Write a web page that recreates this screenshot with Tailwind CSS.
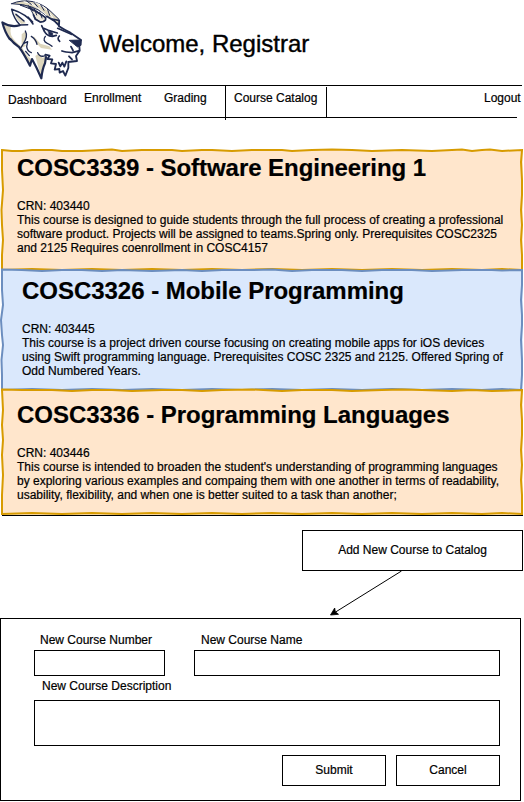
<!DOCTYPE html>
<html lang="en">
<head>
<meta charset="utf-8">
<title>Course Catalog</title>
<script src="https://cdn.jsdelivr.net/npm/@tailwindcss/browser@4"></script>
</head>
<body class="bg-white">
<div class="flex h-[802px] w-[524px] flex-col overflow-hidden bg-white font-['Liberation_Sans',Arial,sans-serif] text-[12px] leading-[14px] text-black [-webkit-text-stroke:0.2px_black]">
  <header class="flex h-[85px] shrink-0">
    <svg class="h-[84px] w-[90px] shrink-0" viewBox="0 0 270 252" fill="none" stroke="#1f2a50" stroke-linejoin="round" stroke-linecap="round">
      <path d="M7 67 Q24 79 43 78 L58 79 L34 29 L78 45 L110 43 L160 60 L178 79 L242 120 L240 151 L229 184 L207 188 L196 227 L188 212 L178 216 L162 188 L145 168 L135 188 L124 235 L94 181 L90 200 L55 143 L28 119 Z" fill="#fff" stroke="none"/>
      <path d="M7 67 Q17 96 29 117 L57 141 L91 198 L94 177 Q76 164 67 143 L48 126 Q26 105 33 82 Q18 78 7 67Z" fill="#ddd6bd" stroke="none"/>
      <path d="M106 168 L124 235 L134 188 L143 164 L128 174 L117 160Z M65 103 L77 93 L81 111 L72 130 L78 137 L65 144Z M100 107 L121 131 L148 139 L156 149 L123 144 L103 123Z M42 37 L78 70 L64 72 Q48 58 42 37Z" fill="#ddd6bd" stroke="none"/>
      <path d="M35 11 Q66 -2 99 5 Q133 14 153 35 L177 58 L177 73 L159 60 L139 47 Q104 13 35 11Z" fill="#ddd6bd" stroke-width="3"/>
      <path d="M61 15 Q88 15 108 32 L135 51 L137 61 L121 67 L107 56 L92 28Z" fill="#eee9da" stroke-width="3"/>
      <path d="M72 5 Q94 8 112 22 L148 54 M100 6 Q128 14 146 35 L162 58" stroke="#fff" stroke-width="3"/>
      <path d="M80 3 L94 13 M101 6 L113 21 M122 14 L132 31 M142 26 L149 46 M86 17 L99 33 M103 26 L110 45 M119 36 L126 54" stroke-width="3"/>
      <path d="M87 23 Q108 33 137 53 Q139 66 121 66 L106 58 L100 44 M140 49 L163 63 L177 77 M157 57 L178 62 L177 77" stroke-width="5"/>
      <path d="M99 72 Q82 43 35 28 Q42 57 60 75 L83 74 M48 43 L72 63 M84 51 L98 66" stroke-width="4.5"/>
      <path d="M59 76 Q33 84 7 67 Q14 96 29 117 L57 141 Q70 158 90 197 L96 177 Q110 202 124 235 Q127 207 135 190 L138 171 M57 141 Q42 132 31 117" stroke-width="6.5"/>
      <path d="M76 93 Q85 109 70 131 L83 125 L80 140 Q82 154 94 158 M94 109 Q108 118 111 133 M113 158 Q120 173 136 167 M136 109 Q126 122 142 130 Q148 132 156 139 M69 133 L63 143 M77 154 L88 167" stroke-width="4"/>
      <path d="M129 84 L145 91 L172 99 M132 91 Q138 109 157 109 L169 106 M173 85 L214 103 M178 108 Q170 116 179 124 M125 77 L133 94" stroke-width="5"/>
      <path d="M145 94 L158 99 L158 108 L148 105Z" fill="#1f2a50" stroke-width="2"/>
      <path d="M209 121 L244 120 L243 136 L233 141 L224 134Z" fill="#1f2a50" stroke-width="3"/>
      <path d="M177 79 Q192 89 211 98 L243 120 M238 139 L239 152 L216 158 Q195 156 186 153 M239 152 L228 168 L231 183 L205 186 L205 204 L196 227 L189 213 L179 218 L178 207 L164 209 L168 192 L153 190 L157 178 L142 177 L149 167 L136 164 M176 188 L181 199 L187 188 L193 200 L199 184 M213 140 L219 151 M207 169 L216 178" stroke-width="5.5"/>
    </svg>
    <h1 class="ml-[9px] mt-[30px] whitespace-nowrap text-[24px] leading-[28px] [-webkit-text-stroke:0.4px_black]">Welcome, Registrar</h1>
  </header>

  <nav class="relative flex h-[65px] shrink-0 whitespace-nowrap">
    <svg class="absolute left-0 top-0 h-[40px] w-[524px]" viewBox="0 0 524 40" stroke="#000" shape-rendering="crispEdges"><path d="M2 .5H522M12 32.5H517M225.500 1V35M326.500 2V32"/></svg>
    <a class="ml-[8px] mt-[8px] w-[76px]">Dashboard</a>
    <a class="mt-[6px] w-[80px]">Enrollment</a>
    <a class="mt-[6px] w-[70px]">Grading</a>
    <a class="mt-[6px] w-[250px]">Course Catalog</a>
    <a class="mt-[6px]">Logout</a>
  </nav>

  <main class="ml-[2px] w-[521px] shrink-0 whitespace-nowrap border-b border-black">
    <section class="relative h-[120px] bg-[#ffe6cc] pl-[15px] pt-[4px]">
      <svg class="absolute -left-[2px] -top-[2px] h-[124px] w-[525px]" viewBox="-2 -2 525 124" fill="none" stroke="#d79b00" stroke-width="2"><path d="M0 0 L10 1 20 1 30 0 50 0 60 1 80 1 100 0 110 -.5 120 1 140 0 170 0 180 1 200 0 210 0 230 1 250 0 280 0 290 1 310 0 330 -.5 350 0 370 1 400 0 430 1 450 0 460 -.5 470 1 480 0 488 -.5 500 1 520 0 519 12 520 30 520 45 519 60 520 75 519 90 520 105 520 120 500 119 480 120 450 119 420 120 390 119 360 120 330 119 300 120 270 119 240 120 210 119 180 120 150 119 120 120 90 119 60 120 30 119 0 120 0 105 1 90 0 75 -.5 60 1 40 0 20Z"/></svg>
      <h2 class="text-[24px] font-bold leading-[28px] tracking-[-0.05px]">COSC3339 - Software Engineering 1</h2>
      <p class="mt-[17px]">CRN: 403440<br>This course is designed to guide students through the full process of creating a professional<br>software product. Projects will be assigned to teams.Spring only. Prerequisites COSC2325<br>and 2125 Requires coenrollment in COSC4157</p>
    </section>
    <section class="relative h-[120px] bg-[#dae8fc] pl-[20px] pt-[7px]">
      <svg class="absolute -left-[2px] -top-[2px] h-[124px] w-[525px]" viewBox="-2 -2 525 124" fill="none" stroke="#6c8ebf" stroke-width="2"><path d="M0 -.5 L20 0 40 1 60 0 80 0 100 1 120 0 150 1 180 0 200 1 220 0 250 0 270 -.5 290 1 310 0 340 0 360 1 380 0 410 0 430 1 460 0 490 0 500 .5 520 0 520 15 519 30 520 45 520 55 519 70 520 90 520 105 519 120 500 119 480 120 450 119 420 120 390 119 360 120 330 119 300 120 270 119 240 120 210 119 180 120 150 119 120 120 90 119 60 120 30 119 0 120 0 105 -.5 90 1 75 0 65 -1 50 1 35 0 20Z"/></svg>
      <h2 class="text-[24px] font-bold leading-[28px] tracking-[-0.03px]">COSC3326 - Mobile Programming</h2>
      <p class="mt-[17px]">CRN: 403445<br>This course is a project driven course focusing on creating mobile apps for iOS devices<br>using Swift programming language. Prerequisites COSC 2325 and 2125. Offered Spring of<br>Odd Numbered Years.</p>
    </section>
    <section class="relative h-[125px] bg-[#ffe6cc] pl-[15px] pt-[11px]">
      <svg class="absolute -left-[2px] -top-[2px] h-[129px] w-[525px]" viewBox="-2 -2 525 129" fill="none" stroke="#d79b00" stroke-width="2"><path d="M0 -.5 L20 0 50 0 70 1 90 0 110 0 130 1 160 0 180 0 200 1 220 0 250 -.5 280 1 300 0 330 0 350 1 380 0 400 -.5 420 0 450 1 470 0 490 1 520 0 519 15 520 30 520 45 519 60 520 75 519 90 520 105 520 124 500 123 480 124 450 123 420 124 390 123 360 124 330 123 300 124 270 123 240 124 210 123 180 124 150 123 120 124 90 123 60 124 30 123 0 124 0 105 1 85 0 65 1 50 0 35 1 20Z"/></svg>
      <h2 class="text-[24px] font-bold leading-[28px] tracking-[-0.03px]">COSC3336 - Programming Languages</h2>
      <p class="mt-[17px]">CRN: 403446<br>This course is intended to broaden the student's understanding of programming languages<br>by exploring various examples and compaing them with one another in terms of readability,<br>usability, flexibility, and when one is better suited to a task than another;</p>
    </section>
  </main>

  <button class="ml-[302px] mt-[14px] h-[41px] w-[221px] shrink-0 border border-black pb-px">Add New Course to Catalog</button>
  <svg class="h-[47px] w-[524px] shrink-0" viewBox="0 571 524 47"><path d="M401.500 571L334 613" stroke="#000"/><path d="M330.500 615L334.700 608L335.300 611.800L338.500 614.300Z" stroke="#000" stroke-width=".8"/></svg>

  <form class="flex h-[183px] w-[521px] shrink-0 flex-col border border-black pl-[33px] pt-[14px]">
    <div class="flex gap-[29px]">
      <label class="flex flex-col"><span class="h-[17px] pl-[6px]">New Course Number</span><input class="h-[26px] w-[131px] border border-black"></label>
      <label class="flex flex-col"><span class="h-[17px] pl-[7px]">New Course Name</span><input class="h-[26px] w-[306px] border border-black"></label>
    </div>
    <label class="mt-[3px] flex flex-col"><span class="h-[21px] pl-[8px]">New Course Description</span><textarea class="h-[46px] w-[466px] resize-none border border-black"></textarea></label>
    <div class="ml-[248px] mt-[9px] flex gap-[10px]">
      <button type="button" class="h-[31px] w-[104px] border border-black pb-px">Submit</button>
      <button type="button" class="h-[31px] w-[104px] border border-black pb-px">Cancel</button>
    </div>
  </form>
</div>
</body>
</html>
